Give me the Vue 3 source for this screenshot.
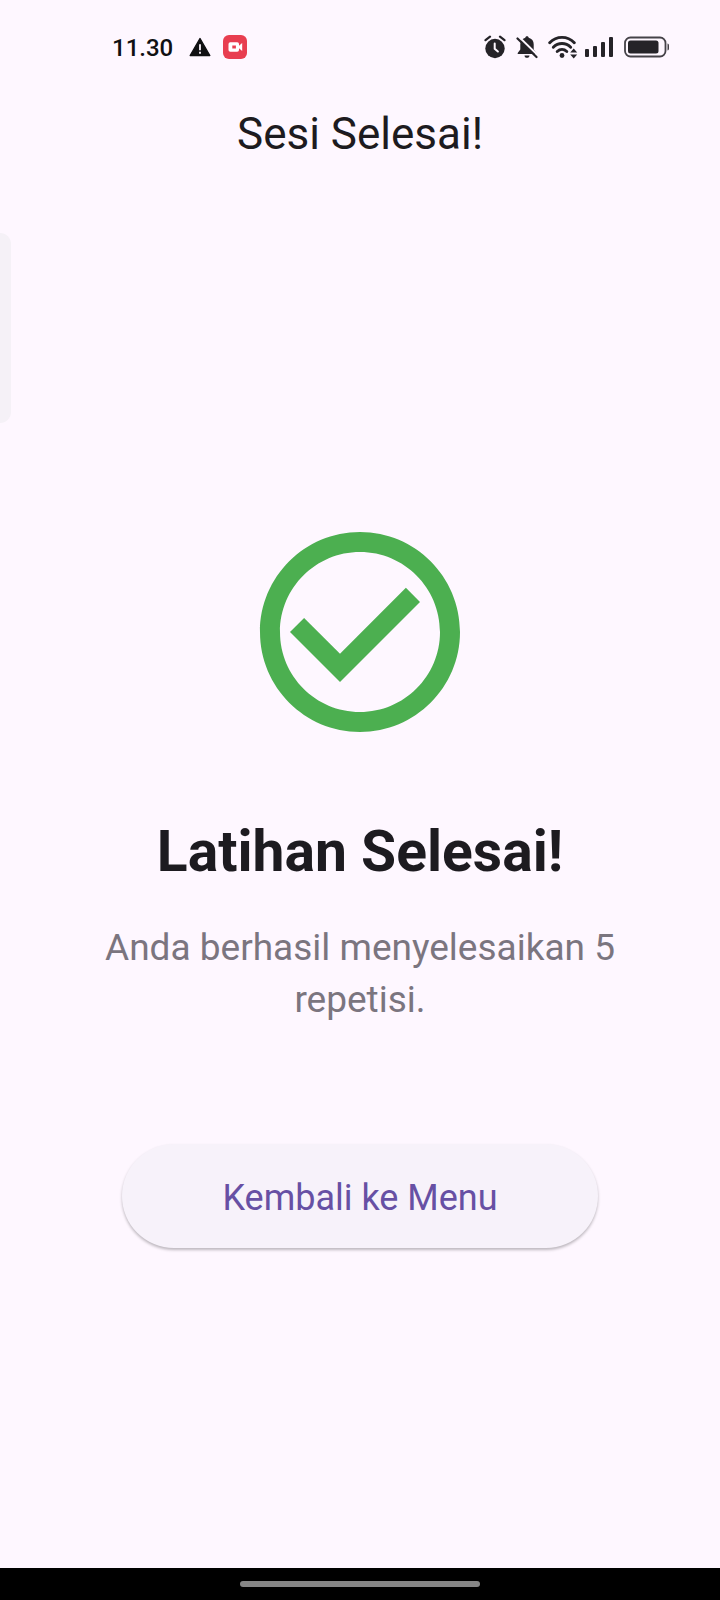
<script setup>
const time = '11.30'
const repetitions = 5
</script>

<template>
  <div class="screen">
    <header class="status-bar">
      <div class="status-group">
        <time class="clock">{{ time }}</time>
        <svg class="warning" viewBox="0 0 22 20" width="22" height="20" aria-hidden="true">
          <path d="M11 1.5 20.8 18.5H1.2Z" fill="#101012" stroke="#101012" stroke-width="1.4" stroke-linejoin="round" />
          <path d="M11 7.2v6M11 14.8v2" stroke="#fef7ff" stroke-width="1.8" />
        </svg>
        <svg viewBox="0 0 24 24" width="24" height="24" aria-hidden="true">
          <rect width="24" height="24" rx="6" fill="#e83e50" />
          <rect x="5.5" y="7.3" width="10.5" height="9.4" rx="1.8" fill="#fff" />
          <path d="M14.5 12l4.7-4v8z" fill="#fff" />
          <path d="M9.300 10.500h3.600v3H9.300z" fill="#e83e50" />
        </svg>
      </div>
      <div class="status-group status-right">
        <svg viewBox="0 0 22 24" width="22" height="24" aria-hidden="true">
          <circle cx="11" cy="13.5" r="9.7" fill="#252328" />
          <path d="M1.5 5.2 6 1.7M20.5 5.2 16 1.7" stroke="#252328" stroke-width="2.2" stroke-linecap="round" />
          <path d="M10.7 8.5v5.3l3.2 2.7" fill="none" stroke="#fef7ff" stroke-width="2" stroke-linecap="round" />
        </svg>
        <svg viewBox="0 0 22 24" width="22" height="24" aria-hidden="true">
          <path d="M11 1.200c1 0 1.700.7 1.700 1.600 3.200.8 5 3.300 5 6.500v5.200l2.600 3.600v1H1.700v-1l2.600-3.600V9.300c0-3.200 1.800-5.700 5-6.500 0-.9.7-1.600 1.700-1.600zM8.500 20.500h5c0 1.400-1.100 2.300-2.500 2.300s-2.500-.9-2.500-2.300z" fill="#252328" />
          <path d="M3.300 2.200 22 20.500" stroke="#fef7ff" stroke-width="2" />
          <path d="M1.500 3.500 20.500 22" stroke="#252328" stroke-width="2.200" stroke-linecap="round" />
        </svg>
        <svg viewBox="0 0 30 24" width="30" height="24" aria-hidden="true">
          <g fill="none" stroke="#252328" stroke-width="2.900" stroke-linecap="round">
            <path d="M1.700 7.700C8.600.600 19.400.600 26.300 7.700" />
            <path d="M5.300 12.300c5-5 12.400-5 17.400 0" />
            <path d="M9.200 16.500c2.900-2.700 6.700-2.700 9.600 0" />
          </g>
          <circle cx="14" cy="20.500" r="2.400" fill="#252328" />
          <path d="M25.700 13.500l3.500 4h-7zM25.700 23.500l-3.500-4h7z" fill="#252328" />
        </svg>
        <svg class="signal" viewBox="0 0 30 22" width="30" height="22" aria-hidden="true">
          <g fill="#252328">
            <rect x="1" y="13" width="4" height="8" rx="1" />
            <rect x="9" y="10" width="4" height="11" rx="1" />
            <rect x="17" y="6" width="4" height="15" rx="1" />
            <rect x="25" y="1" width="4" height="20" rx="1" />
          </g>
        </svg>
        <svg viewBox="0 0 46 22" width="46" height="22" aria-hidden="true">
          <rect x="1" y="1.500" width="40.500" height="19" rx="5.500" fill="none" stroke="#454248" stroke-width="1.800" />
          <rect x="4" y="4.500" width="30.500" height="13" rx="2.500" fill="#252328" />
          <path d="M43.500 7.500c1 .4 1.500 1 1.500 2v3c0 1-.5 1.600-1.500 2z" fill="#454248" />
        </svg>
      </div>
    </header>

    <div class="app-bar">
      <h1>Sesi Selesai!</h1>
    </div>

    <main>
      <svg viewBox="0 0 24 24" width="240" height="240" aria-hidden="true">
        <path fill="#4caf50" d="M16.590 7.580 10 14.170l-3.590-3.580L5 12l5 5 8-8zM12 2C6.480 2 2 6.480 2 12s4.480 10 10 10 10-4.480 10-10S17.520 2 12 2zm0 18c-4.420 0-8-3.580-8-8s3.580-8 8-8 8 3.580 8 8-3.580 8-8 8z" />
      </svg>
      <h2>Latihan Selesai!</h2>
      <p>Anda berhasil menyelesaikan {{ repetitions }} repetisi.</p>
      <button type="button">Kembali ke Menu</button>
    </main>

    <footer class="nav-bar">
      <div class="handle"></div>
    </footer>

    <div class="edge-panel"></div>
  </div>
</template>

<style>
body {
  background: #fef7ff;
}
</style>

<style scoped>
.screen {
  position: relative;
  display: flex;
  flex-direction: column;
  min-height: 100vh;
  overflow: hidden;
  background: #fef7ff;
  color: #1d1b20;
  font-family: Roboto, "Noto Sans", sans-serif;
}

svg {
  display: block;
  flex: none;
}

.status-bar {
  display: flex;
  align-items: center;
  justify-content: space-between;
  box-sizing: border-box;
  height: 78px;
  padding: 16px 50px 0 112px;
}

.status-group {
  display: flex;
  align-items: center;
  gap: 12px;
}

.status-right {
  gap: 10px;
}

.clock {
  padding-top: 2px;
  font-size: 24px;
  line-height: 30px;
  font-weight: 500;
  color: #101012;
}

.warning {
  margin-left: 4px;
}

.signal {
  margin-left: -4px;
}

.app-bar {
  display: flex;
  align-items: center;
  justify-content: center;
  height: 112px;
}

h1,
h2,
p {
  margin: 0;
  text-align: center;
}

h1 {
  font-size: 44px;
  line-height: 56px;
  font-weight: 400;
}

main {
  display: flex;
  flex: 1;
  flex-direction: column;
  align-items: center;
  justify-content: center;
  padding: 2px 64px 0;
}

h2 {
  margin-top: 64px;
  font-size: 57px;
  line-height: 72px;
  font-weight: 700;
}

p {
  margin-top: 34px;
  max-width: 560px;
  font-size: 37px;
  line-height: 52px;
  color: #7b757f;
}

button {
  margin-top: 118px;
  height: 104px;
  padding: 4px 100px 0;
  border: 0;
  border-radius: 52px;
  background: #f7f2fa;
  box-shadow: 0 2px 3px rgba(0, 0, 0, 0.26);
  color: #6750a4;
  font: 400 36px/52px Roboto, "Noto Sans", sans-serif;
  cursor: pointer;
}

.nav-bar {
  display: flex;
  align-items: center;
  justify-content: center;
  height: 32px;
  background: #000;
}

.handle {
  width: 33.333%;
  height: 6px;
  border-radius: 3px;
  background: #858585;
}

.edge-panel {
  position: absolute;
  top: 233px;
  left: 0;
  width: 11px;
  height: 190px;
  border-radius: 0 11px 11px 0;
  background: #f5f1f7;
}
</style>
